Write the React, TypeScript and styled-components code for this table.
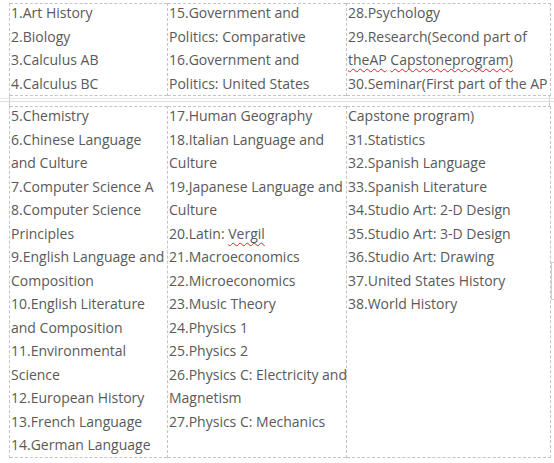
import styled, { createGlobalStyle } from "styled-components"

type Line = string | { text: string; typo?: boolean }[]
type Item = Line[]

const top: Item[][] = [
  [["1.Art History"], ["2.Biology"], ["3.Calculus AB"], ["4.Calculus BC"]],
  [
    ["15.Government and", "Politics: Comparative"],
    ["16.Government and", "Politics: United States"],
  ],
  [
    ["28.Psychology"],
    [
      "29.Research(Second part of",
      [
        { text: "theAP", typo: true },
        { text: " " },
        { text: "Capstoneprogram)", typo: true },
      ],
    ],
    ["30.Seminar(First part of the AP"],
  ],
]

const bottom: Item[][] = [
  [
    ["5.Chemistry"],
    ["6.Chinese Language", "and Culture"],
    ["7.Computer Science A"],
    ["8.Computer Science", "Principles"],
    ["9.English Language and", "Composition"],
    ["10.English Literature", "and Composition"],
    ["11.Environmental", "Science"],
    ["12.European History"],
    ["13.French Language"],
    ["14.German Language"],
  ],
  [
    ["17.Human Geography"],
    ["18.Italian Language and", "Culture"],
    ["19.Japanese Language and", "Culture"],
    [[{ text: "20.Latin: " }, { text: "Vergil", typo: true }]],
    ["21.Macroeconomics"],
    ["22.Microeconomics"],
    ["23.Music Theory"],
    ["24.Physics 1"],
    ["25.Physics 2"],
    ["26.Physics C: Electricity and", "Magnetism"],
    ["27.Physics C: Mechanics"],
  ],
  [
    ["Capstone program)"],
    ["31.Statistics"],
    ["32.Spanish Language"],
    ["33.Spanish Literature"],
    ["34.Studio Art: 2-D Design"],
    ["35.Studio Art: 3-D Design"],
    ["36.Studio Art: Drawing"],
    ["37.United States History"],
    ["38.World History"],
  ],
]

const renderLine = (line: Line, i: number) => (
  <Row key={i}>
    {typeof line === "string"
      ? line
      : line.map((part, j) =>
          part.typo ? <Typo key={j}>{part.text}</Typo> : <span key={j}>{part.text}</span>
        )}
  </Row>
)

const Segment = ({ cols, last }: { cols: Item[][]; last?: boolean }) => (
  <Table $last={last}>
    <colgroup>
      <col style={{ width: 158 }} />
      <col style={{ width: 179 }} />
      <col style={{ width: 204 }} />
    </colgroup>
    <tbody>
      <tr>
        {cols.map((items, c) => (
          <Cell key={c}>
            <CellBody>
              {items.map((item, k) => (
                <Para key={k}>{item.map(renderLine)}</Para>
              ))}
            </CellBody>
          </Cell>
        ))}
      </tr>
    </tbody>
  </Table>
)

const App = () => {
  return (
    <Page>
      <Global />
      <Segment cols={top} />
      <PageBreak>
        <Rule />
        <Rule $dark />
      </PageBreak>
      <Segment cols={bottom} last />
      <Handle />
    </Page>
  )
}

export default App

const Global = createGlobalStyle`
  html, body { margin: 0; padding: 0; background: #fff; }
  body { width: 554px; height: 463px; overflow: hidden; }
`

const Page = styled.div`
  position: relative;
  width: 554px;
  height: 463px;
  padding-top: 3px;
  box-sizing: border-box;
  font-family: "Open Sans", "Noto Sans", sans-serif;
  font-size: 14px;
  color: #595959;
`

const Table = styled.table<{ $last?: boolean }>`
  margin-left: 9px;
  width: 542px;
  table-layout: fixed;
  border-collapse: collapse;
  border: 1px dashed #c4c4c4;
  height: ${(p) => (p.$last ? "352px" : "93px")};
`

const Cell = styled.td`
  vertical-align: top;
  padding: 0 0 0 1px;
  border-left: 1px dashed #c4c4c4;
  white-space: nowrap;
  overflow: visible;
`

const CellBody = styled.div`
  margin-top: -3px;
`

const Para = styled.div``

const Row = styled.div`
  height: 23.5px;
  line-height: 23.5px;
`

const Typo = styled.span`
  text-decoration: underline wavy #e02020;
  text-decoration-thickness: 1px;
  text-underline-offset: 3px;
  text-decoration-skip-ink: none;
`

const PageBreak = styled.div`
  height: 10px;
  margin-left: 9px;
  width: 541px;
  box-sizing: border-box;
  border-left: 1px solid #c8c8c8;
  border-right: 1px dashed #c4c4c4;
  padding-top: 2px;
  display: flex;
  flex-direction: column;
  gap: 2px;
`

const Rule = styled.div<{ $dark?: boolean }>`
  height: 1px;
  margin-left: -10px;
  width: 554px;
  background: ${(p) => (p.$dark ? "#dcdcdc" : "#e6e6e6")};
`

/* table resize handle Word draws at the right edge */
const Handle = styled.div`
  position: absolute;
  right: 0;
  top: 262px;
  width: 2px;
  height: 36px;
  border: 1px solid #d0d0d0;
  border-right: none;
`
